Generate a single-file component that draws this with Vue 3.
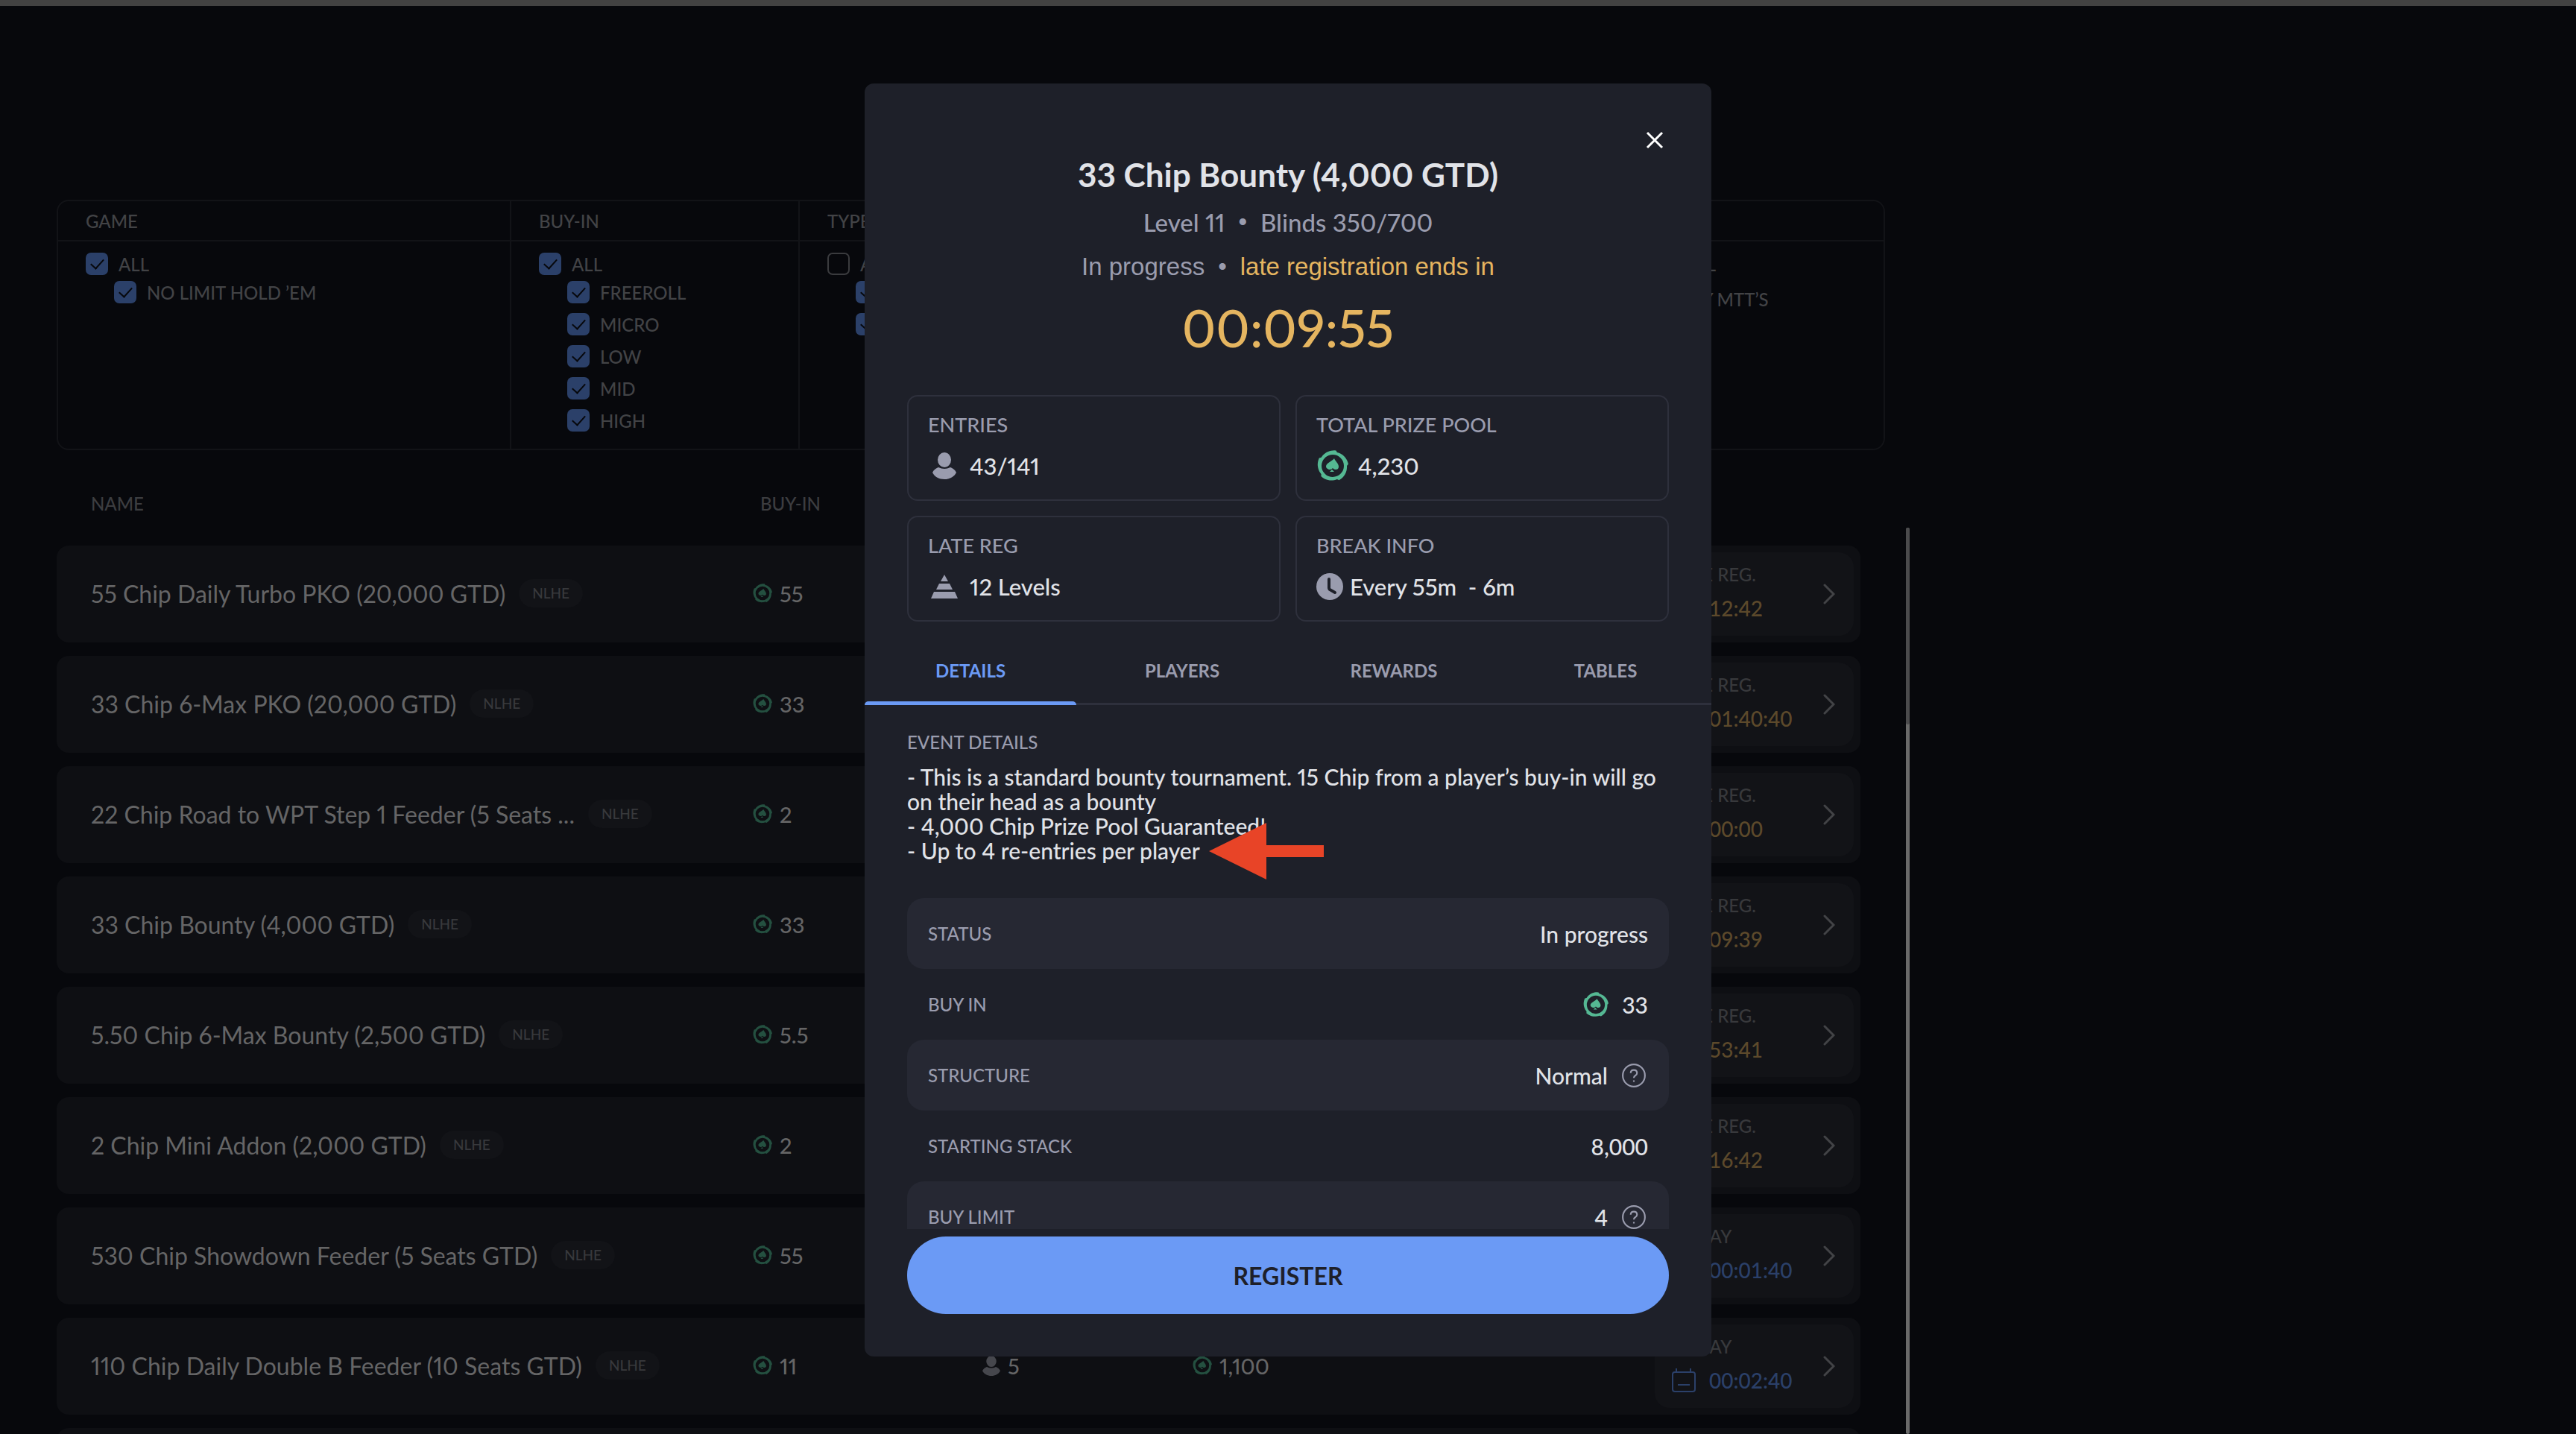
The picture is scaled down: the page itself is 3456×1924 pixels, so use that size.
<template>
  <div class="page">
    <div class="top-bar"></div>

    <div class="stage">
      <!-- Lobby behind the dialog -->
      <main class="lobby">
        <section class="filters">
          <div v-for="(group, groupIndex) in filters" :key="groupIndex" class="filter-group" :class="group.size">
            <div class="filter-title">{{ group.title }}</div>
            <div class="filter-body">
              <label v-for="option in group.options" :key="option.label" class="filter-option" :class="{ nested: option.nested }">
                <input v-model="option.checked" type="checkbox" class="check">
                <span>{{ option.label }}</span>
              </label>
            </div>
          </div>
        </section>

        <div class="list">
          <table class="events">
            <colgroup>
              <col class="col-name">
              <col class="col-buyin">
              <col class="col-entries">
              <col>
              <col class="col-action">
            </colgroup>
            <thead>
              <tr>
                <th>NAME</th>
                <th class="th-buyin">BUY-IN</th>
                <th></th>
                <th></th>
                <th></th>
              </tr>
            </thead>
            <tbody>
              <tr v-for="(event, index) in events" :key="index">
                <td>
                  <div v-if="event.name" class="cell">
                    <span class="event-name">{{ event.name }}</span>
                    <span class="badge">NLHE</span>
                  </div>
                </td>
                <td>
                  <div v-if="event.buyIn" class="cell amount">
                    <svg class="token-small" viewBox="0 0 42 42"><path :d="tokenRing" fill-rule="evenodd" /><path :d="spade" /></svg>
                    {{ event.buyIn }}
                  </div>
                </td>
                <td>
                  <div v-if="event.entries" class="cell amount">
                    <svg class="person-small" viewBox="0 0 32 36"><path :d="person" /></svg>
                    {{ event.entries }}
                  </div>
                </td>
                <td>
                  <div v-if="event.prize" class="cell amount">
                    <svg class="token-small" viewBox="0 0 42 42"><path :d="tokenRing" fill-rule="evenodd" /><path :d="spade" /></svg>
                    {{ event.prize }}
                  </div>
                </td>
                <td>
                  <button v-if="event.time" class="action" :class="event.state">
                    <span class="action-info">
                      <span class="action-label">{{ event.state === 'late' ? 'LATE REG.' : 'TODAY' }}</span>
                      <span class="action-time">
                        <svg class="calendar" viewBox="0 0 32 32"><path d="M4 5h24q3 0 3 3v20q0 3-3 3H4q-3 0-3-3V8q0-3 3-3zM6 0v5M25 0v5M8 22h16" /></svg>
                        {{ event.time }}
                      </span>
                    </span>
                    <svg class="chevron" viewBox="0 0 16 28"><path d="M2 2l12 12L2 26" /></svg>
                  </button>
                </td>
              </tr>
            </tbody>
          </table>
          <div class="scroll-track"><div class="scroll-thumb"></div></div>
        </div>
      </main>

      <!-- Event dialog -->
      <div class="overlay">
        <div class="modal" role="dialog" aria-labelledby="event-title">
          <button class="close" aria-label="Close">
            <svg viewBox="0 0 24 24"><path d="M2 2l20 20M22 2L2 22" /></svg>
          </button>

          <header class="modal-header">
            <h1 id="event-title">33 Chip Bounty (4,000 GTD)</h1>
            <div class="level"><span>Level 11</span><span class="dot">•</span><span>Blinds 350/700</span></div>
            <div class="progress"><span>In progress</span><span class="dot">•</span><span class="late-text">late registration ends in</span></div>
            <div class="timer">00:09:55</div>
          </header>

          <section class="cards">
            <div class="card">
              <div class="card-label">ENTRIES</div>
              <div class="card-value">
                <span class="icon-box"><svg class="person" viewBox="0 0 32 36"><path :d="person" /></svg></span>
                43/141
              </div>
            </div>
            <div class="card">
              <div class="card-label">TOTAL PRIZE POOL</div>
              <div class="card-value">
                <span class="icon-box"><svg class="token" viewBox="0 0 42 42"><path :d="tokenRing" fill-rule="evenodd" /><path :d="spade" /></svg></span>
                4,230
              </div>
            </div>
            <div class="card">
              <div class="card-label">LATE REG</div>
              <div class="card-value">
                <span class="icon-box"><svg class="levels" viewBox="0 0 36 32"><path d="M18 0l5 9H13zM11 12h14l4 8H7zM4 23h28l4 9H0z" /></svg></span>
                12 Levels
              </div>
            </div>
            <div class="card">
              <div class="card-label">BREAK INFO</div>
              <div class="card-value break">
                <svg class="clock" viewBox="0 0 36 36"><circle cx="18" cy="18" r="18" /><path d="M17 8v12q0 1 1 2l7 4" /></svg>
                <span>Every 55m&nbsp; - 6m</span>
              </div>
            </div>
          </section>

          <nav class="tabs">
            <button
              v-for="(tab, index) in tabs"
              :key="tab"
              class="tab"
              :class="{ active: activeTab === index }"
              @click="activeTab = index"
            >
              {{ tab }}
            </button>
          </nav>

          <div class="details">
            <h2>EVENT DETAILS</h2>
            <div class="description">
              <div v-for="line in description" :key="line">{{ line }}</div>
              <!-- Marker pointing at the re-entry line -->
              <svg class="pointer" viewBox="0 0 154 76"><path d="M0 38L77 0v30h77v16H77v30z" /></svg>
            </div>
            <dl class="facts">
              <div v-for="fact in facts" :key="fact.label" class="fact">
                <dt>{{ fact.label }}</dt>
                <dd>
                  <svg v-if="fact.token" class="token-fact" viewBox="0 0 42 42"><path :d="tokenRing" fill-rule="evenodd" /><path :d="spade" /></svg>
                  {{ fact.value }}
                  <svg v-if="fact.help" class="help" viewBox="0 0 32 32"><circle cx="16" cy="16" r="14" /><path d="M12 13q0-4 4-4t4 4q0 2-2 3t-2 3M16 22v2" /></svg>
                </dd>
              </div>
            </dl>
          </div>

          <footer class="modal-footer">
            <button class="register">REGISTER</button>
          </footer>
        </div>
      </div>
    </div>
  </div>
</template>

<script setup>
import { reactive, ref } from 'vue'

const activeTab = ref(0)
const tabs = ['DETAILS', 'PLAYERS', 'REWARDS', 'TABLES']

const filters = reactive([
  {
    title: 'GAME',
    size: 'wide',
    options: [
      { label: 'ALL', checked: true },
      { label: 'NO LIMIT HOLD ’EM', checked: true, nested: true }
    ]
  },
  {
    title: 'BUY-IN',
    size: 'normal',
    options: [
      { label: 'ALL', checked: true },
      { label: 'FREEROLL', checked: true, nested: true },
      { label: 'MICRO', checked: true, nested: true },
      { label: 'LOW', checked: true, nested: true },
      { label: 'MID', checked: true, nested: true },
      { label: 'HIGH', checked: true, nested: true }
    ]
  },
  {
    title: 'TYPE',
    size: 'rest',
    options: [
      { label: 'ALL', checked: false },
      { label: 'BOUNTY', checked: true, nested: true },
      { label: 'FREEZEOUT', checked: true, nested: true }
    ]
  },
  {
    title: '',
    size: 'last',
    options: [
      { label: 'ALL', checked: true },
      { label: 'MY MTT’S', checked: false }
    ]
  }
])

const events = [
  { name: '55 Chip Daily Turbo PKO (20,000 GTD)', buyIn: '55', state: 'late', time: '12:42' },
  { name: '33 Chip 6-Max PKO (20,000 GTD)', buyIn: '33', state: 'late', time: '01:40:40' },
  { name: '22 Chip Road to WPT Step 1 Feeder (5 Seats ...', buyIn: '2', state: 'late', time: '00:00' },
  { name: '33 Chip Bounty (4,000 GTD)', buyIn: '33', state: 'late', time: '09:39' },
  { name: '5.50 Chip 6-Max Bounty (2,500 GTD)', buyIn: '5.5', state: 'late', time: '53:41' },
  { name: '2 Chip Mini Addon (2,000 GTD)', buyIn: '2', state: 'late', time: '16:42' },
  { name: '530 Chip Showdown Feeder (5 Seats GTD)', buyIn: '55', state: 'today', time: '00:01:40' },
  { name: '110 Chip Daily Double B Feeder (10 Seats GTD)', buyIn: '11', entries: '5', prize: '1,100', state: 'today', time: '00:02:40' },
  {} // next row, still loading
]

const description = [
  '- This is a standard bounty tournament. 15 Chip from a player’s buy-in will go on their head as a bounty',
  '- 4,000 Chip Prize Pool Guaranteed!',
  '- Up to 4 re-entries per player'
]

const facts = [
  { label: 'STATUS', value: 'In progress' },
  { label: 'BUY IN', value: '33', token: true },
  { label: 'STRUCTURE', value: 'Normal', help: true },
  { label: 'STARTING STACK', value: '8,000' },
  { label: 'BUY LIMIT', value: '4', help: true }
]

// shared icon shapes
const person = 'M16 0a9 10 0 0 1 0 20a9 10 0 0 1 0-20zM0 27c2-4 5-6 8-7q8 4 16 0c3 1 6 3 8 7c-3 6-9 9-16 9S3 33 0 27z'
const spade = 'M23 11c1 3 6 7 6 11 0 3-2 4-4 4-2 0-3-1-4-2-1 1-2 2-4 2-2 0-5-2-5-4 0-5 8-7 11-11zM20 26l3 3h-6z'

// chip ring with a toothed rim
const makeRing = () => {
  const points = []
  const teeth = 5
  for (let i = 0; i < teeth * 12; i++) {
    const angle = (i / (teeth * 12)) * Math.PI * 2
    const radius = 19 + ((i % 12) / 11) * 2
    points.push(`${(21 + radius * Math.cos(angle)).toFixed(1)} ${(21 + radius * Math.sin(angle)).toFixed(1)}`)
  }
  return `M${points.join('L')}zM6 21a15 15 0 0 0 30 0a15 15 0 0 0-30 0z`
}
const tokenRing = makeRing()
</script>

<style>
body {
  background: #07080c;
}
</style>

<style scoped>
* {
  box-sizing: border-box;
}

.page {
  display: flex;
  flex-direction: column;
  height: 100vh;
  overflow: hidden;
  background: #07080c;
  color: #656566;
  font-family: Lato, 'Liberation Sans', sans-serif;
  font-size: 24px;
  font-weight: 500;
  font-variant-numeric: proportional-nums;
}

button {
  border: none;
  background: none;
  padding: 0;
  font-family: inherit;
  font-weight: inherit;
  cursor: pointer;
}

svg {
  display: block;
  flex: none;
  fill: currentColor;
}

.top-bar {
  flex: none;
  height: 8px;
  background: #424242;
}

.stage {
  position: relative;
  flex: 1;
  min-height: 0;
  overflow: hidden;
}

.lobby {
  width: 100%;
  max-width: 2562px;
  padding: 260px 0 0 76px;
}

/* filters */
.filters {
  display: flex;
  margin-right: 33px;
  height: 336px;
  border: 2px solid #121317;
  border-radius: 16px;
}

.filter-group {
  border-right: 2px solid #121317;
}

.filter-group.wide {
  width: 608px;
}

.filter-group.normal {
  width: 387px;
}

.filter-group.rest {
  flex: 1;
}

.filter-group.last {
  width: 347px;
  border-right: none;
}

.filter-title {
  height: 54px;
  padding: 0 37px;
  border-bottom: 2px solid #121317;
  line-height: 54px;
  color: #424346;
}

.filter-body {
  padding: 15px 37px;
}

.filter-option {
  display: flex;
  align-items: center;
  gap: 14px;
  height: 30px;
  margin-bottom: 13px;
  color: #424346;
}

.filter-option:first-child {
  margin-bottom: 8px;
}

.last .filter-option:first-child {
  margin-bottom: 17px;
}

.filter-option.nested {
  margin-left: 38px;
}

.check {
  appearance: none;
  position: relative;
  width: 30px;
  height: 30px;
  margin: 0;
  border: 2px solid #3a3b3e;
  border-radius: 7px;
}

.check:checked {
  border-color: #2b4069;
  background: #2b4069;
}

.check:checked::after {
  content: '';
  position: absolute;
  left: 5px;
  top: 6px;
  width: 15px;
  height: 8px;
  border-left: 2px solid #07080c;
  border-bottom: 2px solid #07080c;
  transform: rotate(-48deg);
}

/* events table */
.list {
  display: flex;
  gap: 61px;
  margin-top: 14px;
}

.events {
  flex: 1;
  table-layout: fixed;
  border-collapse: separate;
  border-spacing: 0 18px;
}

.col-name {
  width: 934px;
}

.col-buyin {
  width: 308px;
}

.col-entries {
  width: 282px;
}

.col-action {
  width: 276px;
}

th {
  height: 78px;
  padding: 0;
  font-weight: 500;
  text-align: left;
  color: #3c3d40;
}

th:first-child {
  padding-left: 46px;
}

.th-buyin {
  padding-left: 10px;
}

td {
  height: 130px;
  padding: 0;
  background: #0e0f13;
}

td:first-child {
  padding-left: 46px;
  border-radius: 16px 0 0 16px;
}

td:last-child {
  border-radius: 0 16px 16px 0;
}

.cell {
  display: flex;
  align-items: center;
  padding-bottom: 2px;
  font-size: 32px;
}

.event-name {
  font-weight: 400;
  white-space: nowrap;
}

.badge {
  margin-left: 18px;
  padding: 0 18px;
  height: 38px;
  border-radius: 19px;
  background: #121317;
  color: #38393c;
  font-size: 19px;
  line-height: 38px;
}

.amount {
  gap: 10px;
  font-size: 29px;
}

.token-small {
  width: 26px;
  height: 26px;
  color: #245040;
}

.person-small {
  width: 24px;
  height: 27px;
  color: #46474d;
}

.action {
  display: flex;
  align-items: center;
  justify-content: space-between;
  width: 267px;
  height: 112px;
  padding: 0 25px 0 23px;
  border-radius: 20px;
  background: #121317;
  text-align: left;
}

.action-info {
  display: flex;
  flex-direction: column;
  gap: 12px;
  padding-bottom: 6px;
}

.action-label {
  color: #38393c;
  font-size: 24px;
  line-height: 32px;
}

.action-time {
  display: flex;
  align-items: center;
  gap: 18px;
  font-size: 28px;
  line-height: 34px;
}

.late .action-time {
  color: #5c492b;
}

.today .action-time {
  color: #2b4069;
}

.calendar {
  width: 32px;
  height: 32px;
  fill: none;
  stroke: currentColor;
  stroke-width: 2;
}

.chevron {
  width: 16px;
  height: 28px;
  fill: none;
  stroke: #424346;
  stroke-width: 3;
  stroke-linecap: round;
}

.scroll-track {
  width: 5px;
  height: 1216px;
  margin-top: 90px;
  border-radius: 3px;
  background: #6a6a6a;
}

.scroll-thumb {
  height: 264px;
  border-radius: 3px;
  background: #4b4b4d;
}

/* dialog */
.overlay {
  position: absolute;
  inset: 0;
  display: flex;
  align-items: center;
  justify-content: center;
}

.modal {
  position: relative;
  display: flex;
  flex-direction: column;
  width: 100%;
  max-width: 1136px;
  height: calc(100% - 208px);
  border-radius: 12px;
  background: #1e2029;
  color: #e1e3e8;
}

.close {
  position: absolute;
  top: 52px;
  right: 52px;
  display: flex;
  align-items: center;
  justify-content: center;
  width: 48px;
  height: 48px;
  color: #fff;
}

.close svg {
  width: 24px;
  height: 24px;
  stroke: currentColor;
  stroke-width: 3;
}

.modal-header {
  display: flex;
  flex-direction: column;
  align-items: center;
  padding: 94px 57px 48px;
  color: #9a9cae;
}

h1 {
  margin: 0 0 16px;
  color: #e1e3e8;
  font-size: 44px;
  font-weight: 700;
  line-height: 56px;
}

.level,
.progress {
  display: flex;
  gap: 18px;
  font-size: 33px;
  line-height: 40px;
}

.progress {
  margin: 20px 0;
  font-family: 'Liberation Sans', Arial, sans-serif;
  font-weight: 400;
}

.dot {
  font-family: 'Liberation Sans', Arial, sans-serif;
}

.late-text,
.timer {
  color: #e5b560;
}

.timer {
  font-size: 69px;
  line-height: 84px;
}

.cards {
  display: grid;
  grid-template-columns: 1fr 1fr;
  gap: 20px;
  padding: 0 57px;
}

.card {
  padding: 22px 26px 24px;
  border: 2px solid #2e303c;
  border-radius: 14px;
}

.card-label {
  margin-bottom: 18px;
  color: #9a9cae;
  font-size: 27px;
  line-height: 32px;
}

.card-value {
  display: flex;
  align-items: center;
  gap: 12px;
  font-size: 31px;
  line-height: 42px;
}

.card-value.break {
  gap: 9px;
}

.icon-box {
  display: flex;
  justify-content: center;
  width: 44px;
  color: #9a9cae;
}

.person {
  width: 32px;
  height: 36px;
}

.token {
  width: 42px;
  height: 42px;
  color: #55b893;
}

.levels {
  width: 36px;
  height: 32px;
}

.clock {
  width: 36px;
  height: 36px;
  color: #9a9cae;
}

.clock path {
  fill: none;
  stroke: #1e2029;
  stroke-width: 4;
  stroke-linecap: round;
}

.tabs {
  display: grid;
  grid-template-columns: repeat(4, 1fr);
  margin-top: 18px;
  box-shadow: inset 0 -3px #2e303c;
}

.tab {
  position: relative;
  height: 94px;
  color: #9a9cae;
  font-size: 24px;
  font-weight: 700;
}

.tab.active {
  color: #6b9af5;
}

.tab.active::after {
  content: '';
  position: absolute;
  inset: auto 0 0;
  height: 5px;
  border-radius: 5px 5px 0 0;
  background: #6b9af5;
}

.details {
  flex: 1;
  min-height: 0;
  overflow: hidden;
  padding: 34px 57px 0;
}

h2 {
  margin: 0 0 14px;
  color: #9a9cae;
  font-size: 24px;
  font-weight: 500;
  line-height: 32px;
}

.description {
  position: relative;
  font-size: 30px;
  line-height: 33px;
}

.pointer {
  position: absolute;
  left: 405px;
  bottom: -22px;
  width: 154px;
  height: 76px;
  color: #e84427;
}

.facts {
  margin: 47px 0 0;
}

.fact {
  display: flex;
  align-items: center;
  justify-content: space-between;
  height: 95px;
  padding: 0 28px;
  border-radius: 22px;
}

.fact:nth-child(odd) {
  background: #262833;
}

dt {
  color: #9a9cae;
  font-size: 24px;
}

dd {
  display: flex;
  align-items: center;
  gap: 18px;
  margin: 0;
  font-size: 30px;
  font-variant-numeric: normal;
}

.token-fact {
  width: 34px;
  height: 34px;
  color: #55b893;
}

.help {
  width: 34px;
  height: 34px;
  margin-right: 2px;
  fill: none;
  stroke: #9a9cae;
  stroke-width: 2;
}

.modal-footer {
  padding: 10px 57px 57px;
}

.register {
  display: block;
  width: 100%;
  height: 104px;
  border-radius: 52px;
  background: #6b9af5;
  color: #1e2029;
  font-size: 32px;
  font-weight: 700;
}
</style>
